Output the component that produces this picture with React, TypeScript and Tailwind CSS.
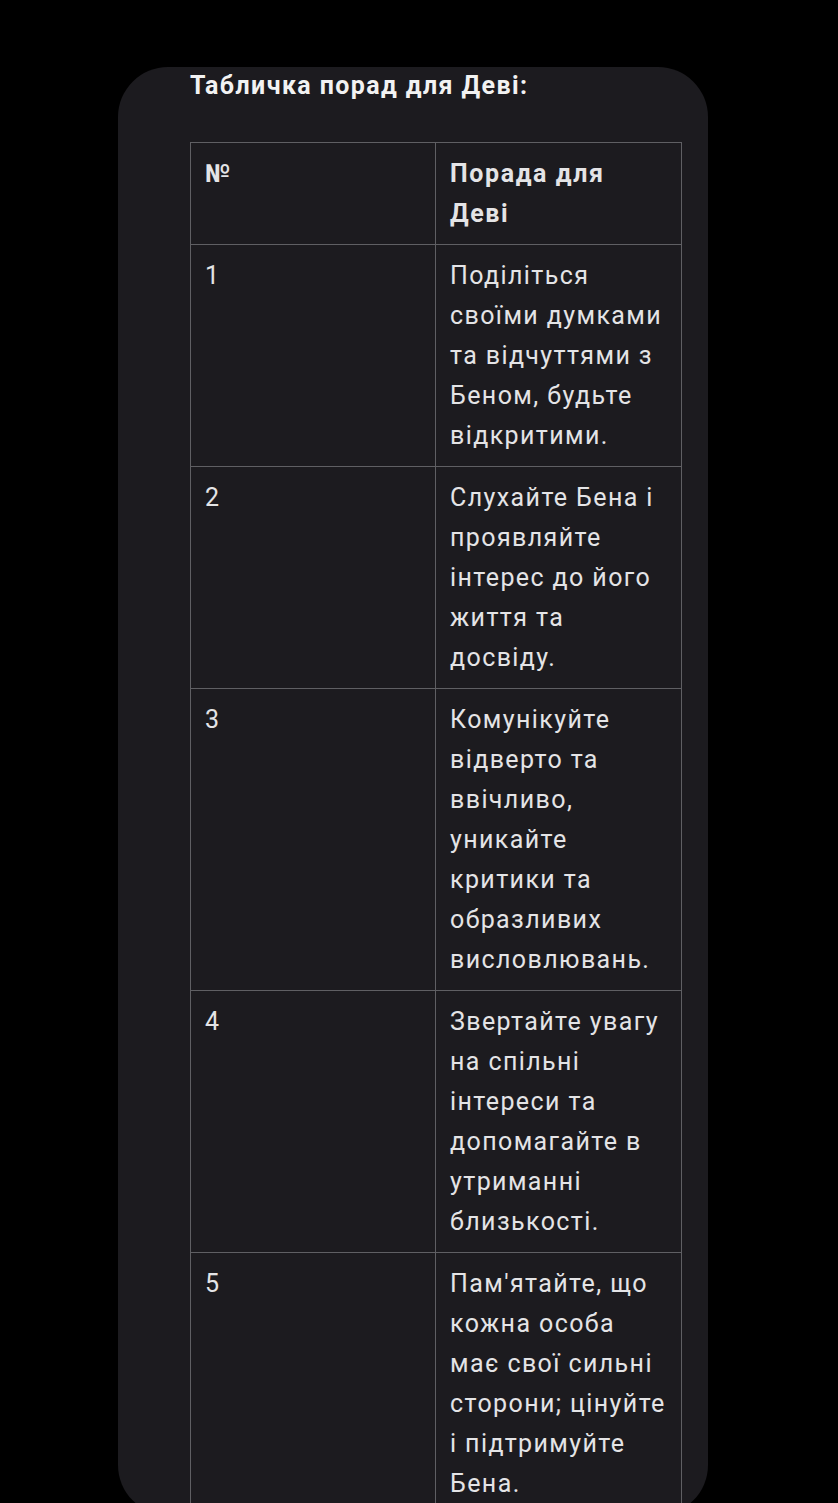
const tips = [
  { n: "1", text: "Поділіться своїми думками та відчуттями з Беном, будьте відкритими." },
  { n: "2", text: "Слухайте Бена і проявляйте інтерес до його життя та досвіду." },
  { n: "3", text: "Комунікуйте відверто та ввічливо, уникайте критики та образливих висловлювань." },
  { n: "4", text: "Звертайте увагу на спільні інтереси та допомагайте в утриманні близькості." },
  { n: "5", text: "Пам'ятайте, що кожна особа має свої сильні сторони; цінуйте і підтримуйте Бена." },
];

export default function App() {
  return (
    <div className="h-[1503px] overflow-hidden bg-black pt-[67px] font-['Roboto',sans-serif]">
      <div className="ml-[118px] w-[590px] rounded-[50px] bg-[#1c1b1f] pl-[72px] pr-[26px]">
        <h1 className="text-[25px] font-bold leading-[38px] text-[#f2f2f2] tracking-[1.4px]">
          Табличка порад для Деві:
        </h1>
        <table className="mt-[37px] w-[492px] table-fixed border-collapse text-[25px] leading-[40px] tracking-[1.4px] text-[#e4e4e6]">
          <thead>
            <tr>
              <th className="w-[245px] border border-[#5f5f63] pl-[14px] pr-[13px] pt-[11px] pb-[10px] text-left align-top font-bold tracking-[1.6px]">
                №
              </th>
              <th className="border border-[#5f5f63] pl-[14px] pr-[13px] pt-[11px] pb-[10px] text-left align-top font-bold tracking-[1.6px]">
                Порада для Деві
              </th>
            </tr>
          </thead>
          <tbody>
            {tips.map((t) => (
              <tr key={t.n}>
                <td className="border border-[#5f5f63] pl-[14px] pr-[13px] pt-[11px] pb-[10px] align-top">{t.n}</td>
                <td className="border border-[#5f5f63] pl-[14px] pr-[13px] pt-[11px] pb-[10px] align-top">{t.text}</td>
              </tr>
            ))}
          </tbody>
        </table>
      </div>
    </div>
  );
}
